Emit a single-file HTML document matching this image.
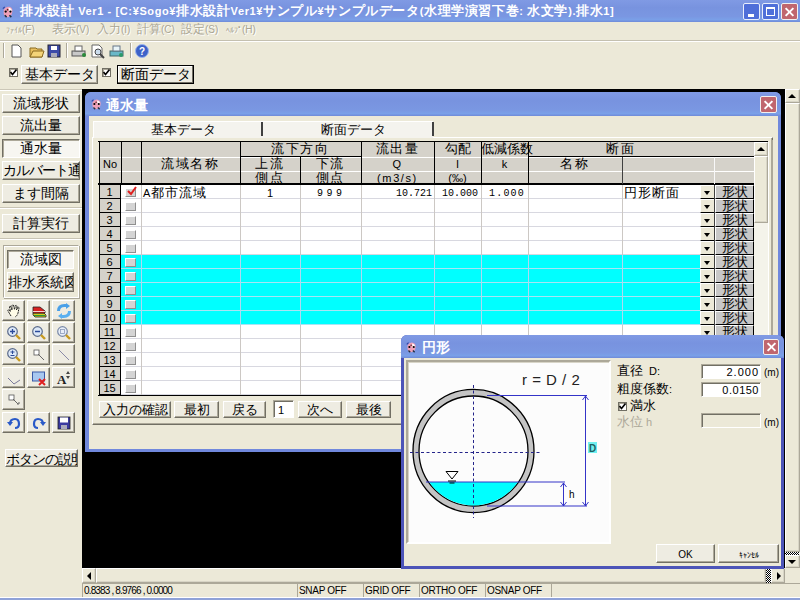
<!DOCTYPE html><html><head><meta charset="utf-8"><style>
*{margin:0;padding:0;box-sizing:border-box}
html,body{width:800px;height:600px;overflow:hidden;background:#ece9d8;font-family:"Liberation Sans",sans-serif;font-size:12px;color:#000;position:relative}
.a{position:absolute}
.tb{background:linear-gradient(#809ae4,#7893df 35%,#7a97e2 75%,#7aa0e8 90%,#6f8ad8)}
.btn{position:absolute;background:#eeecE2;border:1px solid;border-color:#fff #716f64 #716f64 #fff;box-shadow:inset -1px -1px 0 #aca899;text-align:center;white-space:nowrap;overflow:hidden;line-height:1;padding-top:1px}
.btn.dn{background:#f7f6f1;border-color:#716f64 #fff #fff #716f64;box-shadow:inset 1px 1px 0 #aca899}
.sunk{position:absolute;border:1px solid;border-color:#aca899 #fff #fff #aca899;box-shadow:inset 1px 1px 0 #716f64;background:#fff}
.t{position:absolute;white-space:nowrap;line-height:1}
.xbtn{position:absolute;background:#c0666e;border:1px solid #f0f0f0;border-radius:2px}
.xbtn:before,.xbtn:after{content:"";position:absolute;left:50%;top:50%;width:11px;height:2px;background:#fff;margin:-1px 0 0 -5.5px;transform:rotate(45deg)}
.xbtn:after{transform:rotate(-45deg)}
.cb{position:absolute;width:9px;height:9px;background:#fff;border:1px solid #716f64;box-shadow:inset 1px 1px 0 #aca899}
.arr-d{position:absolute;width:0;height:0;border-left:4px solid transparent;border-right:4px solid transparent;border-top:4px solid #000}
.arr-u{position:absolute;width:0;height:0;border-left:4px solid transparent;border-right:4px solid transparent;border-bottom:4px solid #000}
.arr-l{position:absolute;width:0;height:0;border-top:4px solid transparent;border-bottom:4px solid transparent;border-right:4px solid #000}
.arr-r{position:absolute;width:0;height:0;border-top:4px solid transparent;border-bottom:4px solid transparent;border-left:4px solid #000}
.ib{position:absolute;background:#ece9d8;border:1px solid;border-color:#fff #aca899 #aca899 #fff;box-shadow:inset -1px -1px 0 #d8d5c6}
.g{font-size:11px}
.j{font-size:1.18em;line-height:0}
.h{font-size:0.8em;line-height:0}
</style></head><body>
<div class="a tb" style="left:0px;top:0px;width:800px;height:22px;"></div>
<svg class="a" style="left:1px;top:4px" width="15" height="15" viewBox="0 0 16 16"><path d="M3 6 Q5 2 9 3 Q13 4 12 9 Q11 14 6 14 Q2 13 3 6 Z" fill="#f0a0b8"/><path d="M8 4 Q11 4 11.5 7 L9 9 Z" fill="#fff"/><circle cx="5" cy="8" r="1.2" fill="#000"/><circle cx="10" cy="8" r="1.2" fill="#000"/><circle cx="7" cy="6" r="0.9" fill="#602020"/><path d="M4 12 L6 14 M9 12 L11 14" stroke="#203040" stroke-width="1.6"/><path d="M2 5 L4 3" stroke="#3040a0" stroke-width="1.2"/></svg>
<div class="t" style="left:20px;top:6px;color:#fff;font-weight:bold;font-size:11px;letter-spacing:0.62px"><span class="j">排水設計</span> Ver1 - [C:¥Sogo¥<span class="j">排水設計</span>Ver1¥<span class="j">サンプル</span>¥<span class="j">サンプルデータ</span>(<span class="j">水理学演習下巻</span>: <span class="j">水文学</span>).<span class="j">排水</span>1]</div>
<div class="a" style="left:743px;top:3px;width:17px;height:17px;background:#4f6fd9;border:1px solid #e8eefc;border-radius:2px"><div class="a" style="left:4px;top:10px;width:6px;height:3px;background:#fff"></div></div>
<div class="a" style="left:762px;top:3px;width:17px;height:17px;background:#4f6fd9;border:1px solid #e8eefc;border-radius:2px"><div class="a" style="left:3px;top:3px;width:9px;height:9px;border:1px solid #fff;border-top-width:2px"></div></div>
<div class="xbtn" style="left:781px;top:3px;width:17px;height:17px"></div>
<div class="t" style="left:7px;top:26px;color:#fff;font-size:10px"><span class="h">ﾌｧｲﾙ</span>(F)</div>
<div class="t" style="left:6px;top:25px;color:#a9a593;font-size:10px"><span class="h">ﾌｧｲﾙ</span>(F)</div>
<div class="t" style="left:53px;top:26px;color:#fff;font-size:10px"><span class="j">表示</span>(V)</div>
<div class="t" style="left:52px;top:25px;color:#a9a593;font-size:10px"><span class="j">表示</span>(V)</div>
<div class="t" style="left:98px;top:26px;color:#fff;font-size:10px"><span class="j">入力</span>(I)</div>
<div class="t" style="left:97px;top:25px;color:#a9a593;font-size:10px"><span class="j">入力</span>(I)</div>
<div class="t" style="left:138px;top:26px;color:#fff;font-size:10px"><span class="j">計算</span>(C)</div>
<div class="t" style="left:137px;top:25px;color:#a9a593;font-size:10px"><span class="j">計算</span>(C)</div>
<div class="t" style="left:182px;top:26px;color:#fff;font-size:10px"><span class="j">設定</span>(S)</div>
<div class="t" style="left:181px;top:25px;color:#a9a593;font-size:10px"><span class="j">設定</span>(S)</div>
<div class="t" style="left:227px;top:26px;color:#fff;font-size:10px"><span class="h">ﾍﾙﾌﾟ</span>(H)</div>
<div class="t" style="left:226px;top:25px;color:#a9a593;font-size:10px"><span class="h">ﾍﾙﾌﾟ</span>(H)</div>
<div class="a" style="left:0px;top:40px;width:800px;height:1px;background:#c4c0b0"></div>
<div class="a" style="left:0px;top:41px;width:800px;height:1px;background:#fff"></div>
<div class="a" style="left:3px;top:43px;width:1px;height:15px;background:#aca899"></div>
<div class="a" style="left:4px;top:43px;width:1px;height:15px;background:#fff"></div>
<div class="a" style="left:66px;top:43px;width:1px;height:15px;background:#aca899"></div>
<div class="a" style="left:67px;top:43px;width:1px;height:15px;background:#fff"></div>
<div class="a" style="left:130px;top:43px;width:1px;height:15px;background:#aca899"></div>
<div class="a" style="left:131px;top:43px;width:1px;height:15px;background:#fff"></div>
<svg class="a" style="left:8px;top:43px" width="150" height="16" viewBox="0 0 150 16">
<path d="M4 2 H10 L13 5 V14 H4 Z" fill="#fff" stroke="#555" stroke-width="1"/>
<path d="M22 5 H28 L29 6 H34 V14 H22 Z" fill="#e8c060" stroke="#8a6a20"/><path d="M22 14 L25 8 H36 L34 14 Z" fill="#f4d478" stroke="#8a6a20"/>
<rect x="40" y="2" width="12" height="12" fill="#3c4aa8" stroke="#223"/><rect x="43" y="3" width="6" height="4" fill="#fff"/><rect x="43" y="10" width="6" height="4" fill="#aab"/>
<rect x="64" y="8" width="13" height="5" fill="#c8c8c8" stroke="#555"/><rect x="67" y="3" width="7" height="5" fill="#fff" stroke="#666"/><circle cx="76" cy="12" r="2" fill="#2a8a3a"/>
<path d="M84 2 H91 L94 5 V14 H84 Z" fill="#fff" stroke="#666"/><circle cx="90" cy="9" r="3" fill="#cde" stroke="#444"/><path d="M92 11 L96 15" stroke="#444" stroke-width="2"/>
<rect x="102" y="8" width="13" height="5" fill="#6ab8c8" stroke="#466"/><rect x="105" y="3" width="7" height="5" fill="#e8f4f8" stroke="#678"/><circle cx="113" cy="12" r="2" fill="#2a9a6a"/>
<circle cx="134" cy="8" r="6.5" fill="#3d62c8" stroke="#9ab4ee"/><text x="134" y="12" font-size="10" font-weight="bold" fill="#fff" text-anchor="middle" font-family="Liberation Sans">?</text>
</svg>
<div class="a" style="left:0px;top:89px;width:82px;height:1px;background:#ccc8b8"></div>
<div class="a" style="left:0px;top:90px;width:82px;height:1px;background:#fff"></div>
<div class="cb" style="left:9px;top:68px;width:9px;height:9px"><svg class="a" style="left:0;top:0" width="7" height="7" viewBox="0 0 7 7"><path d="M0.5 3 L2.5 5.5 L6.5 0.5" stroke="#000" stroke-width="1.6" fill="none"/></svg></div>
<div class="btn" style="left:21px;top:65px;width:77px;height:19px;line-height:17px;"><span class="j">基本データ</span></div>
<div class="cb" style="left:102px;top:68px;width:9px;height:9px"><svg class="a" style="left:0;top:0" width="7" height="7" viewBox="0 0 7 7"><path d="M0.5 3 L2.5 5.5 L6.5 0.5" stroke="#000" stroke-width="1.6" fill="none"/></svg></div>
<div class="btn" style="left:117px;top:65px;width:77px;height:19px;line-height:17px;border:1px solid #000;box-shadow:inset -1px -1px 0 #716f64,inset 1px 1px 0 #fff;"><span class="j">断面データ</span></div>
<div class="btn " style="left:2px;top:94px;width:78px;height:19px;line-height:17px;"><span class="j">流域形状</span></div>
<div class="btn " style="left:2px;top:116px;width:78px;height:19px;line-height:17px;"><span class="j">流出量</span></div>
<div class="btn dn" style="left:2px;top:139px;width:78px;height:19px;line-height:17px;"><span class="j">通水量</span></div>
<div class="btn " style="left:2px;top:161px;width:78px;height:19px;line-height:17px;letter-spacing:-1px"><span class="j">カルバート通水</span></div>
<div class="btn " style="left:2px;top:184px;width:78px;height:19px;line-height:17px;"><span class="j">ます間隔</span></div>
<div class="a" style="left:0px;top:207px;width:82px;height:1px;background:#c8c4b4"></div>
<div class="a" style="left:0px;top:208px;width:82px;height:1px;background:#fff"></div>
<div class="btn" style="left:2px;top:214px;width:78px;height:19px;line-height:17px;"><span class="j">計算実行</span></div>
<div class="a" style="left:0px;top:238px;width:82px;height:1px;background:#c8c4b4"></div>
<div class="a" style="left:0px;top:239px;width:82px;height:1px;background:#fff"></div>
<div class="a" style="left:3px;top:245px;width:76px;height:53px;border:1px solid;border-color:#aca899 #fff #fff #aca899;box-shadow:inset 1px 1px 0 #fff,1px 1px 0 #aca899"></div>
<div class="btn dn" style="left:7px;top:250px;width:67px;height:19px;line-height:17px;"><span class="j">流域図</span></div>
<div class="btn" style="left:7px;top:272px;width:67px;height:20px;line-height:18px;"><span class="j">排水系統図</span></div>
<div class="btn" style="left:2px;top:300px;width:23px;height:21px"></div>
<div class="btn" style="left:27px;top:300px;width:23px;height:21px"></div>
<div class="btn" style="left:52px;top:300px;width:23px;height:21px"></div>
<div class="btn" style="left:2px;top:322px;width:23px;height:21px"></div>
<div class="btn" style="left:27px;top:322px;width:23px;height:21px"></div>
<div class="btn" style="left:52px;top:322px;width:23px;height:21px"></div>
<div class="btn" style="left:2px;top:344px;width:23px;height:21px"></div>
<div class="btn" style="left:27px;top:344px;width:23px;height:21px"></div>
<div class="btn" style="left:52px;top:344px;width:23px;height:21px"></div>
<div class="btn" style="left:2px;top:367px;width:23px;height:21px"></div>
<div class="btn" style="left:27px;top:367px;width:23px;height:21px"></div>
<div class="btn" style="left:52px;top:367px;width:23px;height:21px"></div>
<div class="btn" style="left:2px;top:389px;width:23px;height:21px"></div>
<div class="btn" style="left:2px;top:412px;width:23px;height:21px"></div>
<div class="btn" style="left:27px;top:412px;width:23px;height:21px"></div>
<div class="btn" style="left:52px;top:412px;width:23px;height:21px"></div>
<div class="btn" style="left:5px;top:449px;width:73px;height:18px;line-height:16px;letter-spacing:-1px;padding-top:2px"><span class="j">ボタンの説明</span></div>
<div class="a" style="left:82px;top:89px;width:703px;height:479px;background:#000"></div>
<div class="a" style="left:85px;top:92px;width:696px;height:360px;background:#7088dc;border-radius:6px 6px 0 0"></div>
<div class="a tb" style="left:85px;top:92px;width:696px;height:24px;border-radius:6px 6px 0 0"></div>
<div class="a" style="left:89px;top:116px;width:689px;height:333px;background:#ece9d8"></div>
<svg class="a" style="left:90px;top:97px" width="14" height="14" viewBox="0 0 16 16"><path d="M3 6 Q5 2 9 3 Q13 4 12 9 Q11 14 6 14 Q2 13 3 6 Z" fill="#f0a0b8"/><path d="M8 4 Q11 4 11.5 7 L9 9 Z" fill="#fff"/><circle cx="5" cy="8" r="1.2" fill="#000"/><circle cx="10" cy="8" r="1.2" fill="#000"/><circle cx="7" cy="6" r="0.9" fill="#602020"/><path d="M4 12 L6 14 M9 12 L11 14" stroke="#203040" stroke-width="1.6"/><path d="M2 5 L4 3" stroke="#3040a0" stroke-width="1.2"/></svg>
<div class="t" style="left:106px;top:100px;color:#fff;font-weight:bold;font-size:12px"><span class="j">通水量</span></div>
<div class="xbtn" style="left:760px;top:96px;width:17px;height:17px"></div>
<div class="a" style="left:92px;top:137px;width:681px;height:288px;border:1px solid;border-color:#fff #716f64 #716f64 #fff;box-shadow:inset -1px -1px 0 #aca899"></div>
<div class="a" style="left:93px;top:121px;width:340px;height:17px;background:#f4f3ee;border-top:1px solid #fff;border-left:1px solid #fff"></div>
<div class="a" style="left:261px;top:122px;width:2px;height:14px;background:#404040"></div>
<div class="a" style="left:432px;top:122px;width:2px;height:14px;background:#404040"></div>
<div class="t" style="left:151px;top:125px;font-size:11px"><span class="j">基本データ</span></div>
<div class="t" style="left:321px;top:125px;font-size:11px"><span class="j">断面データ</span></div>
<div class="a" style="left:99px;top:142px;width:655px;height:43px;background:#d5d2ca"></div>
<div class="a" style="left:99px;top:157px;width:655px;height:1px;background:#fff"></div>
<div class="a" style="left:99px;top:171px;width:655px;height:1px;background:#fff"></div>
<div class="a" style="left:98px;top:141px;width:670px;height:1px;background:#000"></div>
<div class="a" style="left:99px;top:141px;width:1px;height:255px;background:#000"></div>
<div class="a" style="left:98px;top:183px;width:656px;height:2px;background:#000"></div>
<div class="a" style="left:121px;top:142px;width:1px;height:42px;background:#000"></div>
<div class="a" style="left:141px;top:142px;width:1px;height:42px;background:#000"></div>
<div class="a" style="left:240px;top:142px;width:1px;height:42px;background:#000"></div>
<div class="a" style="left:300px;top:157px;width:1px;height:27px;background:#000"></div>
<div class="a" style="left:361px;top:142px;width:1px;height:42px;background:#000"></div>
<div class="a" style="left:434px;top:142px;width:1px;height:42px;background:#000"></div>
<div class="a" style="left:481px;top:142px;width:1px;height:42px;background:#000"></div>
<div class="a" style="left:528px;top:142px;width:1px;height:42px;background:#000"></div>
<div class="a" style="left:622px;top:157px;width:1px;height:27px;background:#404040"></div>
<div class="a" style="left:714px;top:157px;width:1px;height:27px;background:#f8f8f8"></div>
<div class="a" style="left:754px;top:142px;width:1px;height:42px;background:#000"></div>
<div class="a" style="left:240px;top:156px;width:121px;height:1px;background:#000"></div>
<div class="a" style="left:528px;top:156px;width:226px;height:1px;background:#000"></div>
<div class="t" style="left:99px;top:159px;width:22px;text-align:center;font-size:11px;letter-spacing:0">No</div>
<div class="t" style="left:141px;top:159px;width:99px;text-align:center;font-size:11px;letter-spacing:1.6px"><span class="j">流域名称</span></div>
<div class="t" style="left:240px;top:144px;width:121px;text-align:center;font-size:11px;letter-spacing:1.6px"><span class="j">流下方向</span></div>
<div class="t" style="left:240px;top:159px;width:60px;text-align:center;font-size:11px;letter-spacing:1.6px"><span class="j">上流</span></div>
<div class="t" style="left:240px;top:173px;width:60px;text-align:center;font-size:11px;letter-spacing:1.6px"><span class="j">側点</span></div>
<div class="t" style="left:300px;top:159px;width:61px;text-align:center;font-size:11px;letter-spacing:1.6px"><span class="j">下流</span></div>
<div class="t" style="left:300px;top:173px;width:61px;text-align:center;font-size:11px;letter-spacing:1.6px"><span class="j">側点</span></div>
<div class="t" style="left:361px;top:144px;width:73px;text-align:center;font-size:11px;letter-spacing:1.6px"><span class="j">流出量</span></div>
<div class="t" style="left:361px;top:159px;width:73px;text-align:center;font-size:11px;letter-spacing:1.6px">Q</div>
<div class="t" style="left:361px;top:173px;width:73px;text-align:center;font-size:11px;letter-spacing:1.6px">(m3/s)</div>
<div class="t" style="left:434px;top:144px;width:47px;text-align:center;font-size:11px;letter-spacing:0"><span class="j">勾配</span></div>
<div class="t" style="left:434px;top:159px;width:47px;text-align:center;font-size:11px;letter-spacing:0">I</div>
<div class="t" style="left:434px;top:173px;width:47px;text-align:center;font-size:11px;letter-spacing:0">(‰)</div>
<div class="t" style="left:481px;top:144px;width:47px;text-align:center;font-size:11px;letter-spacing:0"><span class="j">低減係数</span></div>
<div class="t" style="left:481px;top:159px;width:47px;text-align:center;font-size:11px;letter-spacing:0">k</div>
<div class="t" style="left:528px;top:144px;width:186px;text-align:center;font-size:11px;letter-spacing:1.6px"><span class="j">断面</span></div>
<div class="t" style="left:528px;top:159px;width:94px;text-align:center;font-size:11px;letter-spacing:1.6px"><span class="j">名称</span></div>
<div class="a" style="left:121px;top:185px;width:579px;height:14px;background:#fff"></div>
<div class="a" style="left:100px;top:185px;width:20px;height:14px;background:#d5d2ca"></div>
<div class="a" style="left:99px;top:198px;width:22px;height:1px;background:#000"></div>
<div class="t" style="left:99px;top:187px;width:21px;text-align:center;font-size:11px">1</div>
<div class="a" style="left:121px;top:198px;width:579px;height:1px;background:#d8d8e0"></div>
<div class="a" style="left:125px;top:188px;width:11px;height:9px;background:#d4d4d4;border:1px solid;border-color:#fff #909090 #909090 #fff"></div>
<div class="a" style="left:700px;top:185px;width:14px;height:14px;background:#ece9d8;border-bottom:1px solid #000;border-left:1px solid #fff;border-top:1px solid #fff"></div>
<div class="arr-d" style="left:704px;top:191px;border-width:4px 3px 0 3px"></div>
<div class="a" style="left:714px;top:185px;width:1px;height:14px;background:#404040"></div>
<div class="a" style="left:715px;top:185px;width:39px;height:14px;background:#c8c8c8;border:1px solid;border-color:#fff #000 #000 #fff;text-align:center;font-size:11px;line-height:12px"><span class="j">形状</span></div>
<div class="a" style="left:121px;top:199px;width:579px;height:14px;background:#fff"></div>
<div class="a" style="left:100px;top:199px;width:20px;height:14px;background:#d5d2ca"></div>
<div class="a" style="left:99px;top:212px;width:22px;height:1px;background:#000"></div>
<div class="t" style="left:99px;top:201px;width:21px;text-align:center;font-size:11px">2</div>
<div class="a" style="left:121px;top:212px;width:579px;height:1px;background:#d8d8e0"></div>
<div class="a" style="left:125px;top:202px;width:11px;height:9px;background:#d4d4d4;border:1px solid;border-color:#fff #909090 #909090 #fff"></div>
<div class="a" style="left:700px;top:199px;width:14px;height:14px;background:#ece9d8;border-bottom:1px solid #000;border-left:1px solid #fff;border-top:1px solid #fff"></div>
<div class="arr-d" style="left:704px;top:205px;border-width:4px 3px 0 3px"></div>
<div class="a" style="left:714px;top:199px;width:1px;height:14px;background:#404040"></div>
<div class="a" style="left:715px;top:199px;width:39px;height:14px;background:#c8c8c8;border:1px solid;border-color:#fff #000 #000 #fff;text-align:center;font-size:11px;line-height:12px"><span class="j">形状</span></div>
<div class="a" style="left:121px;top:213px;width:579px;height:14px;background:#fff"></div>
<div class="a" style="left:100px;top:213px;width:20px;height:14px;background:#d5d2ca"></div>
<div class="a" style="left:99px;top:226px;width:22px;height:1px;background:#000"></div>
<div class="t" style="left:99px;top:215px;width:21px;text-align:center;font-size:11px">3</div>
<div class="a" style="left:121px;top:226px;width:579px;height:1px;background:#d8d8e0"></div>
<div class="a" style="left:125px;top:216px;width:11px;height:9px;background:#d4d4d4;border:1px solid;border-color:#fff #909090 #909090 #fff"></div>
<div class="a" style="left:700px;top:213px;width:14px;height:14px;background:#ece9d8;border-bottom:1px solid #000;border-left:1px solid #fff;border-top:1px solid #fff"></div>
<div class="arr-d" style="left:704px;top:219px;border-width:4px 3px 0 3px"></div>
<div class="a" style="left:714px;top:213px;width:1px;height:14px;background:#404040"></div>
<div class="a" style="left:715px;top:213px;width:39px;height:14px;background:#c8c8c8;border:1px solid;border-color:#fff #000 #000 #fff;text-align:center;font-size:11px;line-height:12px"><span class="j">形状</span></div>
<div class="a" style="left:121px;top:227px;width:579px;height:14px;background:#fff"></div>
<div class="a" style="left:100px;top:227px;width:20px;height:14px;background:#d5d2ca"></div>
<div class="a" style="left:99px;top:240px;width:22px;height:1px;background:#000"></div>
<div class="t" style="left:99px;top:229px;width:21px;text-align:center;font-size:11px">4</div>
<div class="a" style="left:121px;top:240px;width:579px;height:1px;background:#d8d8e0"></div>
<div class="a" style="left:125px;top:230px;width:11px;height:9px;background:#d4d4d4;border:1px solid;border-color:#fff #909090 #909090 #fff"></div>
<div class="a" style="left:700px;top:227px;width:14px;height:14px;background:#ece9d8;border-bottom:1px solid #000;border-left:1px solid #fff;border-top:1px solid #fff"></div>
<div class="arr-d" style="left:704px;top:233px;border-width:4px 3px 0 3px"></div>
<div class="a" style="left:714px;top:227px;width:1px;height:14px;background:#404040"></div>
<div class="a" style="left:715px;top:227px;width:39px;height:14px;background:#c8c8c8;border:1px solid;border-color:#fff #000 #000 #fff;text-align:center;font-size:11px;line-height:12px"><span class="j">形状</span></div>
<div class="a" style="left:121px;top:241px;width:579px;height:14px;background:#fff"></div>
<div class="a" style="left:100px;top:241px;width:20px;height:14px;background:#d5d2ca"></div>
<div class="a" style="left:99px;top:254px;width:22px;height:1px;background:#000"></div>
<div class="t" style="left:99px;top:243px;width:21px;text-align:center;font-size:11px">5</div>
<div class="a" style="left:121px;top:254px;width:579px;height:1px;background:#d8d8e0"></div>
<div class="a" style="left:125px;top:244px;width:11px;height:9px;background:#d4d4d4;border:1px solid;border-color:#fff #909090 #909090 #fff"></div>
<div class="a" style="left:700px;top:241px;width:14px;height:14px;background:#ece9d8;border-bottom:1px solid #000;border-left:1px solid #fff;border-top:1px solid #fff"></div>
<div class="arr-d" style="left:704px;top:247px;border-width:4px 3px 0 3px"></div>
<div class="a" style="left:714px;top:241px;width:1px;height:14px;background:#404040"></div>
<div class="a" style="left:715px;top:241px;width:39px;height:14px;background:#c8c8c8;border:1px solid;border-color:#fff #000 #000 #fff;text-align:center;font-size:11px;line-height:12px"><span class="j">形状</span></div>
<div class="a" style="left:121px;top:255px;width:579px;height:14px;background:#00ffff"></div>
<div class="a" style="left:100px;top:255px;width:20px;height:14px;background:#d5d2ca"></div>
<div class="a" style="left:99px;top:268px;width:22px;height:1px;background:#000"></div>
<div class="t" style="left:99px;top:257px;width:21px;text-align:center;font-size:11px">6</div>
<div class="a" style="left:121px;top:268px;width:579px;height:1px;background:#a8e4f4"></div>
<div class="a" style="left:125px;top:258px;width:11px;height:9px;background:#d4d4d4;border:1px solid;border-color:#fff #909090 #909090 #fff"></div>
<div class="a" style="left:700px;top:255px;width:14px;height:14px;background:#ece9d8;border-bottom:1px solid #000;border-left:1px solid #fff;border-top:1px solid #fff"></div>
<div class="arr-d" style="left:704px;top:261px;border-width:4px 3px 0 3px"></div>
<div class="a" style="left:714px;top:255px;width:1px;height:14px;background:#404040"></div>
<div class="a" style="left:715px;top:255px;width:39px;height:14px;background:#c8c8c8;border:1px solid;border-color:#fff #000 #000 #fff;text-align:center;font-size:11px;line-height:12px"><span class="j">形状</span></div>
<div class="a" style="left:121px;top:269px;width:579px;height:14px;background:#00ffff"></div>
<div class="a" style="left:100px;top:269px;width:20px;height:14px;background:#d5d2ca"></div>
<div class="a" style="left:99px;top:282px;width:22px;height:1px;background:#000"></div>
<div class="t" style="left:99px;top:271px;width:21px;text-align:center;font-size:11px">7</div>
<div class="a" style="left:121px;top:282px;width:579px;height:1px;background:#a8e4f4"></div>
<div class="a" style="left:125px;top:272px;width:11px;height:9px;background:#d4d4d4;border:1px solid;border-color:#fff #909090 #909090 #fff"></div>
<div class="a" style="left:700px;top:269px;width:14px;height:14px;background:#ece9d8;border-bottom:1px solid #000;border-left:1px solid #fff;border-top:1px solid #fff"></div>
<div class="arr-d" style="left:704px;top:275px;border-width:4px 3px 0 3px"></div>
<div class="a" style="left:714px;top:269px;width:1px;height:14px;background:#404040"></div>
<div class="a" style="left:715px;top:269px;width:39px;height:14px;background:#c8c8c8;border:1px solid;border-color:#fff #000 #000 #fff;text-align:center;font-size:11px;line-height:12px"><span class="j">形状</span></div>
<div class="a" style="left:121px;top:283px;width:579px;height:14px;background:#00ffff"></div>
<div class="a" style="left:100px;top:283px;width:20px;height:14px;background:#d5d2ca"></div>
<div class="a" style="left:99px;top:296px;width:22px;height:1px;background:#000"></div>
<div class="t" style="left:99px;top:285px;width:21px;text-align:center;font-size:11px">8</div>
<div class="a" style="left:121px;top:296px;width:579px;height:1px;background:#a8e4f4"></div>
<div class="a" style="left:125px;top:286px;width:11px;height:9px;background:#d4d4d4;border:1px solid;border-color:#fff #909090 #909090 #fff"></div>
<div class="a" style="left:700px;top:283px;width:14px;height:14px;background:#ece9d8;border-bottom:1px solid #000;border-left:1px solid #fff;border-top:1px solid #fff"></div>
<div class="arr-d" style="left:704px;top:289px;border-width:4px 3px 0 3px"></div>
<div class="a" style="left:714px;top:283px;width:1px;height:14px;background:#404040"></div>
<div class="a" style="left:715px;top:283px;width:39px;height:14px;background:#c8c8c8;border:1px solid;border-color:#fff #000 #000 #fff;text-align:center;font-size:11px;line-height:12px"><span class="j">形状</span></div>
<div class="a" style="left:121px;top:297px;width:579px;height:14px;background:#00ffff"></div>
<div class="a" style="left:100px;top:297px;width:20px;height:14px;background:#d5d2ca"></div>
<div class="a" style="left:99px;top:310px;width:22px;height:1px;background:#000"></div>
<div class="t" style="left:99px;top:299px;width:21px;text-align:center;font-size:11px">9</div>
<div class="a" style="left:121px;top:310px;width:579px;height:1px;background:#a8e4f4"></div>
<div class="a" style="left:125px;top:300px;width:11px;height:9px;background:#d4d4d4;border:1px solid;border-color:#fff #909090 #909090 #fff"></div>
<div class="a" style="left:700px;top:297px;width:14px;height:14px;background:#ece9d8;border-bottom:1px solid #000;border-left:1px solid #fff;border-top:1px solid #fff"></div>
<div class="arr-d" style="left:704px;top:303px;border-width:4px 3px 0 3px"></div>
<div class="a" style="left:714px;top:297px;width:1px;height:14px;background:#404040"></div>
<div class="a" style="left:715px;top:297px;width:39px;height:14px;background:#c8c8c8;border:1px solid;border-color:#fff #000 #000 #fff;text-align:center;font-size:11px;line-height:12px"><span class="j">形状</span></div>
<div class="a" style="left:121px;top:311px;width:579px;height:14px;background:#00ffff"></div>
<div class="a" style="left:100px;top:311px;width:20px;height:14px;background:#d5d2ca"></div>
<div class="a" style="left:99px;top:324px;width:22px;height:1px;background:#000"></div>
<div class="t" style="left:99px;top:313px;width:21px;text-align:center;font-size:11px">10</div>
<div class="a" style="left:121px;top:324px;width:579px;height:1px;background:#a8e4f4"></div>
<div class="a" style="left:125px;top:314px;width:11px;height:9px;background:#d4d4d4;border:1px solid;border-color:#fff #909090 #909090 #fff"></div>
<div class="a" style="left:700px;top:311px;width:14px;height:14px;background:#ece9d8;border-bottom:1px solid #000;border-left:1px solid #fff;border-top:1px solid #fff"></div>
<div class="arr-d" style="left:704px;top:317px;border-width:4px 3px 0 3px"></div>
<div class="a" style="left:714px;top:311px;width:1px;height:14px;background:#404040"></div>
<div class="a" style="left:715px;top:311px;width:39px;height:14px;background:#c8c8c8;border:1px solid;border-color:#fff #000 #000 #fff;text-align:center;font-size:11px;line-height:12px"><span class="j">形状</span></div>
<div class="a" style="left:121px;top:325px;width:579px;height:14px;background:#fff"></div>
<div class="a" style="left:100px;top:325px;width:20px;height:14px;background:#d5d2ca"></div>
<div class="a" style="left:99px;top:338px;width:22px;height:1px;background:#000"></div>
<div class="t" style="left:99px;top:327px;width:21px;text-align:center;font-size:11px">11</div>
<div class="a" style="left:121px;top:338px;width:579px;height:1px;background:#d8d8e0"></div>
<div class="a" style="left:125px;top:328px;width:11px;height:9px;background:#d4d4d4;border:1px solid;border-color:#fff #909090 #909090 #fff"></div>
<div class="a" style="left:700px;top:325px;width:14px;height:14px;background:#ece9d8;border-bottom:1px solid #000;border-left:1px solid #fff;border-top:1px solid #fff"></div>
<div class="arr-d" style="left:704px;top:331px;border-width:4px 3px 0 3px"></div>
<div class="a" style="left:714px;top:325px;width:1px;height:14px;background:#404040"></div>
<div class="a" style="left:715px;top:325px;width:39px;height:14px;background:#c8c8c8;border:1px solid;border-color:#fff #000 #000 #fff;text-align:center;font-size:11px;line-height:12px"><span class="j">形状</span></div>
<div class="a" style="left:121px;top:339px;width:579px;height:14px;background:#fff"></div>
<div class="a" style="left:100px;top:339px;width:20px;height:14px;background:#d5d2ca"></div>
<div class="a" style="left:99px;top:352px;width:22px;height:1px;background:#000"></div>
<div class="t" style="left:99px;top:341px;width:21px;text-align:center;font-size:11px">12</div>
<div class="a" style="left:121px;top:352px;width:579px;height:1px;background:#d8d8e0"></div>
<div class="a" style="left:125px;top:342px;width:11px;height:9px;background:#d4d4d4;border:1px solid;border-color:#fff #909090 #909090 #fff"></div>
<div class="a" style="left:700px;top:339px;width:14px;height:14px;background:#ece9d8;border-bottom:1px solid #000;border-left:1px solid #fff;border-top:1px solid #fff"></div>
<div class="arr-d" style="left:704px;top:345px;border-width:4px 3px 0 3px"></div>
<div class="a" style="left:714px;top:339px;width:1px;height:14px;background:#404040"></div>
<div class="a" style="left:715px;top:339px;width:39px;height:14px;background:#c8c8c8;border:1px solid;border-color:#fff #000 #000 #fff;text-align:center;font-size:11px;line-height:12px"><span class="j">形状</span></div>
<div class="a" style="left:121px;top:353px;width:579px;height:14px;background:#fff"></div>
<div class="a" style="left:100px;top:353px;width:20px;height:14px;background:#d5d2ca"></div>
<div class="a" style="left:99px;top:366px;width:22px;height:1px;background:#000"></div>
<div class="t" style="left:99px;top:355px;width:21px;text-align:center;font-size:11px">13</div>
<div class="a" style="left:121px;top:366px;width:579px;height:1px;background:#d8d8e0"></div>
<div class="a" style="left:125px;top:356px;width:11px;height:9px;background:#d4d4d4;border:1px solid;border-color:#fff #909090 #909090 #fff"></div>
<div class="a" style="left:700px;top:353px;width:14px;height:14px;background:#ece9d8;border-bottom:1px solid #000;border-left:1px solid #fff;border-top:1px solid #fff"></div>
<div class="arr-d" style="left:704px;top:359px;border-width:4px 3px 0 3px"></div>
<div class="a" style="left:714px;top:353px;width:1px;height:14px;background:#404040"></div>
<div class="a" style="left:715px;top:353px;width:39px;height:14px;background:#c8c8c8;border:1px solid;border-color:#fff #000 #000 #fff;text-align:center;font-size:11px;line-height:12px"><span class="j">形状</span></div>
<div class="a" style="left:121px;top:367px;width:579px;height:14px;background:#fff"></div>
<div class="a" style="left:100px;top:367px;width:20px;height:14px;background:#d5d2ca"></div>
<div class="a" style="left:99px;top:380px;width:22px;height:1px;background:#000"></div>
<div class="t" style="left:99px;top:369px;width:21px;text-align:center;font-size:11px">14</div>
<div class="a" style="left:121px;top:380px;width:579px;height:1px;background:#d8d8e0"></div>
<div class="a" style="left:125px;top:370px;width:11px;height:9px;background:#d4d4d4;border:1px solid;border-color:#fff #909090 #909090 #fff"></div>
<div class="a" style="left:700px;top:367px;width:14px;height:14px;background:#ece9d8;border-bottom:1px solid #000;border-left:1px solid #fff;border-top:1px solid #fff"></div>
<div class="arr-d" style="left:704px;top:373px;border-width:4px 3px 0 3px"></div>
<div class="a" style="left:714px;top:367px;width:1px;height:14px;background:#404040"></div>
<div class="a" style="left:715px;top:367px;width:39px;height:14px;background:#c8c8c8;border:1px solid;border-color:#fff #000 #000 #fff;text-align:center;font-size:11px;line-height:12px"><span class="j">形状</span></div>
<div class="a" style="left:121px;top:381px;width:579px;height:14px;background:#fff"></div>
<div class="a" style="left:100px;top:381px;width:20px;height:14px;background:#d5d2ca"></div>
<div class="a" style="left:99px;top:394px;width:22px;height:1px;background:#000"></div>
<div class="t" style="left:99px;top:383px;width:21px;text-align:center;font-size:11px">15</div>
<div class="a" style="left:121px;top:394px;width:579px;height:1px;background:#d8d8e0"></div>
<div class="a" style="left:125px;top:384px;width:11px;height:9px;background:#d4d4d4;border:1px solid;border-color:#fff #909090 #909090 #fff"></div>
<div class="a" style="left:700px;top:381px;width:14px;height:14px;background:#ece9d8;border-bottom:1px solid #000;border-left:1px solid #fff;border-top:1px solid #fff"></div>
<div class="arr-d" style="left:704px;top:387px;border-width:4px 3px 0 3px"></div>
<div class="a" style="left:714px;top:381px;width:1px;height:14px;background:#404040"></div>
<div class="a" style="left:715px;top:381px;width:39px;height:14px;background:#c8c8c8;border:1px solid;border-color:#fff #000 #000 #fff;text-align:center;font-size:11px;line-height:12px"><span class="j">形状</span></div>
<div class="a" style="left:141px;top:185px;width:1px;height:70px;background:#ccc8c4"></div>
<div class="a" style="left:141px;top:255px;width:1px;height:70px;background:#b0d8f0"></div>
<div class="a" style="left:141px;top:325px;width:1px;height:70px;background:#ccc8c4"></div>
<div class="a" style="left:240px;top:185px;width:1px;height:70px;background:#ccc8c4"></div>
<div class="a" style="left:240px;top:255px;width:1px;height:70px;background:#b0d8f0"></div>
<div class="a" style="left:240px;top:325px;width:1px;height:70px;background:#ccc8c4"></div>
<div class="a" style="left:300px;top:185px;width:1px;height:70px;background:#ccc8c4"></div>
<div class="a" style="left:300px;top:255px;width:1px;height:70px;background:#b0d8f0"></div>
<div class="a" style="left:300px;top:325px;width:1px;height:70px;background:#ccc8c4"></div>
<div class="a" style="left:361px;top:185px;width:1px;height:70px;background:#ccc8c4"></div>
<div class="a" style="left:361px;top:255px;width:1px;height:70px;background:#b0d8f0"></div>
<div class="a" style="left:361px;top:325px;width:1px;height:70px;background:#ccc8c4"></div>
<div class="a" style="left:434px;top:185px;width:1px;height:70px;background:#ccc8c4"></div>
<div class="a" style="left:434px;top:255px;width:1px;height:70px;background:#b0d8f0"></div>
<div class="a" style="left:434px;top:325px;width:1px;height:70px;background:#ccc8c4"></div>
<div class="a" style="left:481px;top:185px;width:1px;height:70px;background:#ccc8c4"></div>
<div class="a" style="left:481px;top:255px;width:1px;height:70px;background:#b0d8f0"></div>
<div class="a" style="left:481px;top:325px;width:1px;height:70px;background:#ccc8c4"></div>
<div class="a" style="left:528px;top:185px;width:1px;height:70px;background:#ccc8c4"></div>
<div class="a" style="left:528px;top:255px;width:1px;height:70px;background:#b0d8f0"></div>
<div class="a" style="left:528px;top:325px;width:1px;height:70px;background:#ccc8c4"></div>
<div class="a" style="left:622px;top:185px;width:1px;height:70px;background:#ccc8c4"></div>
<div class="a" style="left:622px;top:255px;width:1px;height:70px;background:#b0d8f0"></div>
<div class="a" style="left:622px;top:325px;width:1px;height:70px;background:#ccc8c4"></div>
<div class="a" style="left:120px;top:185px;width:1px;height:210px;background:#000"></div>
<svg class="a" style="left:126px;top:186px" width="12" height="11" viewBox="0 0 12 11"><path d="M2 5 L5 8 L10 1" stroke="#e02020" stroke-width="2" fill="none"/></svg>
<div class="t" style="left:143px;top:188px;font-size:11px;letter-spacing:1px">A<span class="j">都市流域</span></div>
<div class="t" style="left:240px;top:188px;width:60px;text-align:center;font-size:11px">1</div>
<div class="t" style="left:317px;top:189px;font-family:'Liberation Mono';font-size:10px;letter-spacing:3.5px">999</div>
<div class="t" style="left:396px;top:189px;font-family:'Liberation Mono';font-size:10px">10.721</div>
<div class="t" style="left:442px;top:189px;font-family:'Liberation Mono';font-size:10px">10.000</div>
<div class="t" style="left:489px;top:189px;font-family:'Liberation Mono';font-size:10px;letter-spacing:1.2px">1.000</div>
<div class="t" style="left:624px;top:188px;font-size:11px;letter-spacing:1px"><span class="j">円形断面</span></div>
<div class="a" style="left:754px;top:142px;width:14px;height:253px;background:#f4f3ea"></div>
<div class="ib" style="left:754px;top:142px;width:14px;height:14px"></div>
<div class="arr-u" style="left:757px;top:147px"></div>
<div class="ib" style="left:754px;top:156px;width:14px;height:67px"></div>
<div class="a" style="left:768px;top:142px;width:1px;height:253px;background:#fff"></div>
<div class="a" style="left:772px;top:140px;width:1px;height:284px;background:#aca899"></div>
<div class="btn" style="left:99px;top:401px;width:72px;height:17px;line-height:15px;font-size:11px"><span class="j">入力の確認</span></div>
<div class="btn" style="left:174px;top:401px;width:45px;height:17px;line-height:15px;font-size:11px"><span class="j">最初</span></div>
<div class="btn" style="left:223px;top:401px;width:43px;height:17px;line-height:15px;font-size:11px"><span class="j">戻る</span></div>
<div class="btn" style="left:298px;top:401px;width:44px;height:17px;line-height:15px;font-size:11px"><span class="j">次へ</span></div>
<div class="btn" style="left:346px;top:401px;width:45px;height:17px;line-height:15px;font-size:11px"><span class="j">最後</span></div>
<div class="sunk" style="left:273px;top:400px;width:21px;height:18px;font-size:11px;padding:3px 0 0 4px">1</div>
<div class="a" style="left:98px;top:395px;width:656px;height:1px;background:#000"></div>
<div class="a" style="left:785px;top:89px;width:15px;height:479px;background:#f4f3ea"></div>
<div class="ib" style="left:785px;top:89px;width:15px;height:14px"></div>
<div class="arr-u" style="left:788px;top:94px"></div>
<div class="ib" style="left:785px;top:103px;width:15px;height:449px"></div>
<div class="a" style="left:785px;top:552px;width:14px;height:3px;background:repeating-conic-gradient(#000 0 25%,#fff 0 50%) 0 0/2px 2px"></div>
<div class="ib" style="left:785px;top:555px;width:15px;height:13px"></div>
<div class="arr-d" style="left:788px;top:560px"></div>
<div class="a" style="left:82px;top:568px;width:703px;height:15px;background:#f4f3ea"></div>
<div class="ib" style="left:82px;top:568px;width:14px;height:15px"></div>
<div class="arr-l" style="left:87px;top:572px"></div>
<div class="ib" style="left:96px;top:568px;width:670px;height:15px"></div>
<div class="a" style="left:766px;top:569px;width:5px;height:14px;background:repeating-conic-gradient(#000 0 25%,#fff 0 50%) 0 0/2px 2px"></div>
<div class="ib" style="left:771px;top:568px;width:14px;height:15px"></div>
<div class="arr-r" style="left:777px;top:572px"></div>
<div class="a" style="left:785px;top:568px;width:15px;height:15px;background:#ece9d8"></div>
<div class="a" style="left:82px;top:583px;width:215px;height:14px;border-left:1px solid #aca899;border-top:1px solid #aca899;font-size:10px;line-height:14px;padding-left:1px;letter-spacing:-0.85px;white-space:nowrap;overflow:hidden">0.8383 , 8.9766 , 0.0000</div>
<div class="a" style="left:297px;top:583px;width:66px;height:14px;border-left:1px solid #aca899;border-top:1px solid #aca899;font-size:10px;line-height:14px;padding-left:1px;letter-spacing:-0.3px;white-space:nowrap;overflow:hidden">SNAP OFF</div>
<div class="a" style="left:363px;top:583px;width:56px;height:14px;border-left:1px solid #aca899;border-top:1px solid #aca899;font-size:10px;line-height:14px;padding-left:1px;letter-spacing:-0.3px;white-space:nowrap;overflow:hidden">GRID OFF</div>
<div class="a" style="left:419px;top:583px;width:66px;height:14px;border-left:1px solid #aca899;border-top:1px solid #aca899;font-size:10px;line-height:14px;padding-left:1px;letter-spacing:-0.3px;white-space:nowrap;overflow:hidden">ORTHO OFF</div>
<div class="a" style="left:485px;top:583px;width:66px;height:14px;border-left:1px solid #aca899;border-top:1px solid #aca899;font-size:10px;line-height:14px;padding-left:1px;letter-spacing:-0.3px;white-space:nowrap;overflow:hidden">OSNAP OFF</div>
<div class="a" style="left:551px;top:583px;width:249px;height:14px;border-left:1px solid #aca899;border-top:1px solid #aca899;font-size:10px;line-height:14px;padding-left:1px;letter-spacing:-0.3px;white-space:nowrap;overflow:hidden"></div>
<div class="a" style="left:0px;top:597px;width:800px;height:1px;background:#fff"></div>
<div class="a" style="left:0px;top:598px;width:800px;height:2px;background:#8fa2d8"></div>
<svg class="a" style="left:6px;top:303px" width="16" height="16" viewBox="0 0 16 16"><path d="M5 13 L2 8 Q1.5 7 2.5 6.8 L4.5 8.5 L3.5 4 Q3.5 3 4.5 3 L6 7 L6 2.5 Q6.5 1.5 7.5 2 L8.5 6.5 L9.5 2.5 Q10.5 2 11 3 L10.5 7 L12 4 Q13 4 13 5 L12 10 Q11 13 9 14" fill="#fffce8" stroke="#222" stroke-width="1" stroke-dasharray="2 0.6"/></svg>
<svg class="a" style="left:31px;top:303px" width="16" height="16" viewBox="0 0 16 16"><path d="M2 10 H13 L15 12 V14 H4 L2 12 Z" fill="#e8d020" stroke="#222" stroke-width="0.8"/><path d="M3 12.5 H14" stroke="#2a9a3a" stroke-width="1.2"/><path d="M2 4 H9 L14 8 V10 H2 Z" fill="#d82020" stroke="#222" stroke-width="0.8"/><path d="M2 8.5 H14" stroke="#fff" stroke-width="0.8"/></svg>
<svg class="a" style="left:56px;top:303px" width="16" height="16" viewBox="0 0 16 16"><path d="M2.5 8 Q2.5 2.5 8.5 2.5 H11" stroke="#4aa0e8" stroke-width="3" fill="none"/><path d="M10 0 L14 3 L10 6 Z" fill="#4aa0e8"/><path d="M13.5 8 Q13.5 13.5 7.5 13.5 H5" stroke="#5ab0f0" stroke-width="3" fill="none"/><path d="M6 10 L2 13 L6 16 Z" fill="#5ab0f0"/></svg>
<svg class="a" style="left:6px;top:325px" width="16" height="16" viewBox="0 0 16 16"><circle cx="6.5" cy="6.5" r="4.8" fill="#dce8f8" stroke="#5a6a8a" stroke-width="1.2"/><path d="M10 10 L14 14" stroke="#c89a20" stroke-width="2.4"/><path d="M4 6.5 H9 M6.5 4 V9" stroke="#2a4a9a" stroke-width="1.3"/></svg>
<svg class="a" style="left:31px;top:325px" width="16" height="16" viewBox="0 0 16 16"><circle cx="6.5" cy="6.5" r="4.8" fill="#dce8f8" stroke="#5a6a8a" stroke-width="1.2"/><path d="M10 10 L14 14" stroke="#c89a20" stroke-width="2.4"/><path d="M4 6.5 H9" stroke="#2a4a9a" stroke-width="1.5"/></svg>
<svg class="a" style="left:56px;top:325px" width="16" height="16" viewBox="0 0 16 16"><circle cx="6.5" cy="6.5" r="4.8" fill="#e8eef8" stroke="#7a8aa8" stroke-width="1.2"/><path d="M10 10 L14 14" stroke="#c89a20" stroke-width="2.4"/><rect x="4.5" y="4.5" width="4" height="4" fill="none" stroke="#8a9ab8" stroke-width="0.8"/></svg>
<svg class="a" style="left:6px;top:347px" width="16" height="16" viewBox="0 0 16 16"><circle cx="6.5" cy="6.5" r="4.8" fill="#dce8f8" stroke="#5a6a8a" stroke-width="1.2"/><path d="M10 10 L14 14" stroke="#c89a20" stroke-width="2.4"/><path d="M4.5 5 H8.5 M6.5 3.5 V7 M4.5 8.5 H8.5" stroke="#2a4a9a" stroke-width="1"/></svg>
<svg class="a" style="left:31px;top:347px" width="16" height="16" viewBox="0 0 16 16"><rect x="3" y="3" width="5" height="5" fill="#fff" stroke="#555" stroke-width="0.8"/><path d="M7 7 L13 13" stroke="#666" stroke-width="1"/></svg>
<svg class="a" style="left:56px;top:347px" width="16" height="16" viewBox="0 0 16 16"><path d="M3 3 L13 13" stroke="#8a8aa8" stroke-width="1"/></svg>
<svg class="a" style="left:6px;top:370px" width="16" height="16" viewBox="0 0 16 16"><path d="M2 8 L8 14 L14 10" stroke="#7a7a9a" stroke-width="1" fill="none"/></svg>
<svg class="a" style="left:31px;top:370px" width="16" height="16" viewBox="0 0 16 16"><rect x="1.5" y="2" width="12" height="9" fill="#a8c8f0" stroke="#3a5aa8" stroke-width="1"/><path d="M8 9 L14 15 M14 9 L8 15" stroke="#e02020" stroke-width="2"/></svg>
<svg class="a" style="left:56px;top:370px" width="16" height="16" viewBox="0 0 16 16"><text x="1" y="14" font-family="Liberation Serif" font-weight="bold" font-size="13" fill="#222">A</text><path d="M12 1 L14 4 H10 Z M12 9 L14 6 H10 Z" fill="#444"/></svg>
<svg class="a" style="left:6px;top:392px" width="16" height="16" viewBox="0 0 16 16"><rect x="3" y="3" width="5" height="5" fill="#fff" stroke="#555" stroke-width="0.8"/><path d="M7 7 L12 12 M11 12 H13 V10" stroke="#666" stroke-width="1" fill="none"/></svg>
<svg class="a" style="left:6px;top:415px" width="16" height="16" viewBox="0 0 16 16"><path d="M4 9 Q4 4 9 4 Q13 4 13 9 Q13 13 9 13" stroke="#2a5ac8" stroke-width="2.2" fill="none"/><path d="M1 7 L4 11 L7 7 Z" fill="#2a5ac8"/></svg>
<svg class="a" style="left:31px;top:415px" width="16" height="16" viewBox="0 0 16 16"><path d="M12 9 Q12 4 7 4 Q3 4 3 9 Q3 13 7 13" stroke="#2a5ac8" stroke-width="2.2" fill="none"/><path d="M9 7 L12 11 L15 7 Z" fill="#2a5ac8"/></svg>
<svg class="a" style="left:56px;top:415px" width="16" height="16" viewBox="0 0 16 16"><rect x="2" y="2" width="12" height="12" fill="#3a3aa0" stroke="#222" stroke-width="0.8"/><rect x="4" y="2.5" width="8" height="5" fill="#fff"/><rect x="5" y="10" width="6" height="4" fill="#aab"/></svg>
<div class="a" style="left:401px;top:335px;width:383px;height:234px;background:#4c54b8;border-radius:6px 6px 0 0"></div>
<div class="a tb" style="left:401px;top:335px;width:383px;height:23px;border-radius:6px 6px 0 0"></div>
<div class="a" style="left:404px;top:358px;width:377px;height:208px;background:#ece9d8"></div>
<svg class="a" style="left:405px;top:340px" width="14" height="14" viewBox="0 0 16 16"><path d="M3 6 Q5 2 9 3 Q13 4 12 9 Q11 14 6 14 Q2 13 3 6 Z" fill="#f0a0b8"/><path d="M8 4 Q11 4 11.5 7 L9 9 Z" fill="#fff"/><circle cx="5" cy="8" r="1.2" fill="#000"/><circle cx="10" cy="8" r="1.2" fill="#000"/><circle cx="7" cy="6" r="0.9" fill="#602020"/><path d="M4 12 L6 14 M9 12 L11 14" stroke="#203040" stroke-width="1.6"/><path d="M2 5 L4 3" stroke="#3040a0" stroke-width="1.2"/></svg>
<div class="t" style="left:422px;top:342px;color:#fff;font-weight:bold;font-size:12px"><span class="j">円形</span></div>
<div class="xbtn" style="left:763px;top:339px;width:16px;height:16px"></div>
<div class="a" style="left:406px;top:360px;width:205px;height:184px;background:#fcfcfc;border:2px solid;border-color:#aca899 #fff #fff #aca899;box-shadow:inset 1px 1px 0 #d8d5c8"></div>
<svg class="a" style="left:0;top:0" width="800" height="600" viewBox="0 0 800 600">
<defs><clipPath id="wc"><rect x="400" y="482" width="200" height="40"/></clipPath></defs>
<path fill-rule="evenodd" d="M413 451 A60.5 61.5 0 1 0 534 451 A60.5 61.5 0 1 0 413 451 Z M419 451 A54.5 55 0 1 0 528 451 A54.5 55 0 1 0 419 451 Z" fill="#c4c4c4" stroke="#000" stroke-width="1.3"/>
<ellipse cx="473.5" cy="451" rx="54" ry="54.5" fill="#00ffff" clip-path="url(#wc)"/>
<path d="M426 482 H565 M487 395.5 H587 M487 506 H587" stroke="#3434c8" stroke-width="1"/>
<path d="M585.5 396 V506 M563.5 483 V506" stroke="#3434c8" stroke-width="1"/>
<path d="M582.5 400 L585.5 396 L588.5 400 M582.5 502 L585.5 506 L588.5 502 M560.5 487 L563.5 483 L566.5 487 M560.5 502 L563.5 506 L566.5 502" stroke="#3434c8" fill="none"/>
<path d="M473.5 385 V518" stroke="#24248a" stroke-width="1" stroke-dasharray="3 2.5"/>
<path d="M410 452.5 H541" stroke="#24248a" stroke-width="1" stroke-dasharray="3 2.5"/>
<path d="M446 471.5 H458 L452 479 Z" fill="#fff" stroke="#000"/>
<path d="M448 481 H456 M449.5 483 H454.5" stroke="#000"/>
<rect x="588" y="442" width="9" height="11" fill="#70f0f0"/>
<text x="589" y="451.5" font-family="Liberation Sans" font-size="10" font-weight="bold" fill="#206060">D</text>
<text x="569" y="498" font-family="Liberation Sans" font-size="10" fill="#000">h</text>
<text x="522" y="385" font-family="Liberation Sans" font-size="15" fill="#222" letter-spacing="0.5">r = D / 2</text>
</svg>
<div class="t" style="left:617px;top:366px;font-size:11px"><span class="j">直径</span> &nbsp;D:</div>
<div class="t" style="left:617px;top:384px;font-size:11px"><span class="j">粗度係数</span>:</div>
<div class="sunk" style="left:701px;top:364px;width:60px;height:15px;font-size:11px;text-align:right;padding:1px 1px 0 0;letter-spacing:1px">2.000</div>
<div class="sunk" style="left:701px;top:382px;width:60px;height:15px;font-size:11px;text-align:right;padding:1px 1px 0 0;letter-spacing:0.5px">0.0150</div>
<div class="sunk" style="left:701px;top:413px;width:60px;height:15px;background:#ece9d8"></div>
<div class="t" style="left:764px;top:368px;font-size:10px">(m)</div>
<div class="t" style="left:764px;top:418px;font-size:10px">(m)</div>
<div class="cb" style="left:618px;top:402px;width:9px;height:9px"><svg class="a" style="left:0;top:0" width="7" height="7" viewBox="0 0 7 7"><path d="M0.5 3 L2.5 5.5 L6.5 0.5" stroke="#000" stroke-width="1.6" fill="none"/></svg></div>
<div class="t" style="left:630px;top:401px;font-size:11px"><span class="j">満水</span></div>
<div class="t" style="left:617px;top:417px;font-size:11px;color:#aca899"><span class="j">水位</span> h</div>
<div class="btn" style="left:656px;top:544px;width:59px;height:19px;line-height:17px;font-size:10px">OK</div>
<div class="btn" style="left:718px;top:544px;width:61px;height:19px;line-height:17px;font-size:10px"><span class="h">ｷｬﾝｾﾙ</span></div>
</body></html>
